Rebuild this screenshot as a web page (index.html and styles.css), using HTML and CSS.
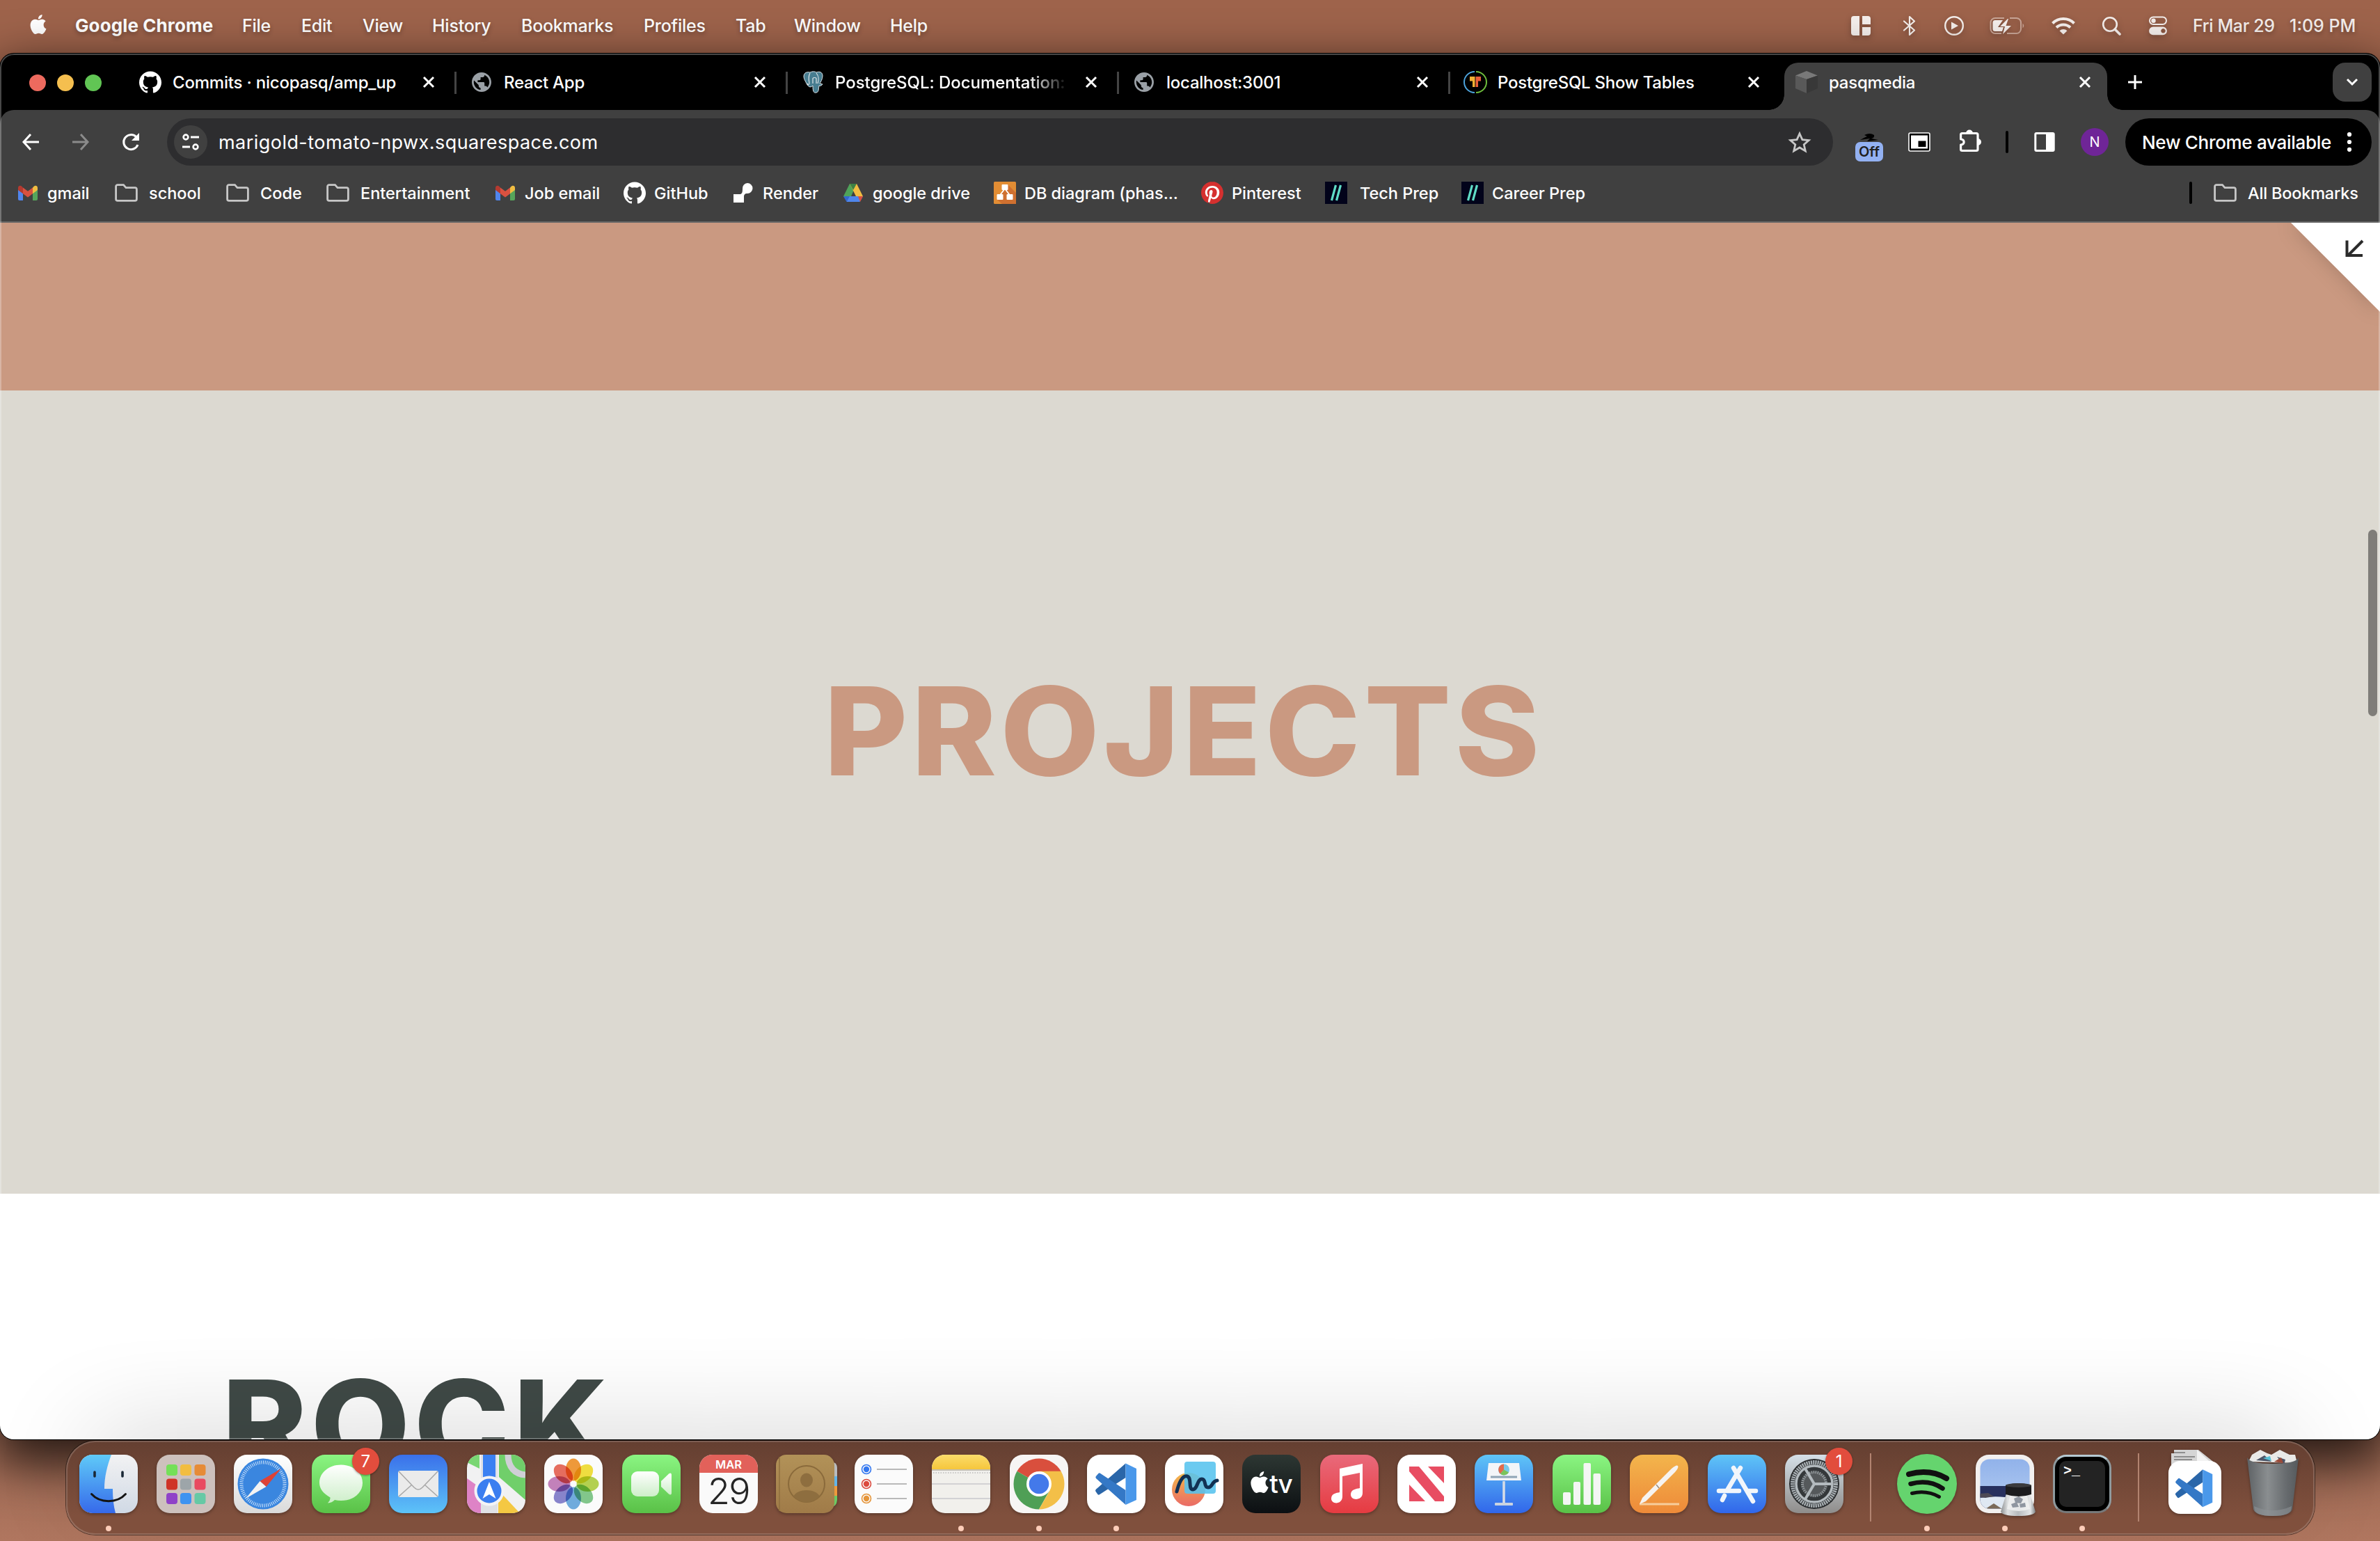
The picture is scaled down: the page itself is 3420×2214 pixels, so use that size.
FILE: index.html
```html
<!DOCTYPE html>
<html lang="en">
<head>
<meta charset="utf-8">
<title>pasqmedia</title>
<link rel="stylesheet" href="styles.css">
</head>
<body>
<svg width="0" height="0" class="defs" aria-hidden="true">
  <defs>
    <linearGradient id="gGreen" x2="0" y2="1"><stop offset="0" stop-color="#8af582"/><stop offset="1" stop-color="#5ac147"/></linearGradient>
    <linearGradient id="gMail" x2="0" y2="1"><stop offset="0" stop-color="#3a70ea"/><stop offset="1" stop-color="#5dc3f8"/></linearGradient>
    <linearGradient id="gBlue" x2="0" y2="1"><stop offset="0" stop-color="#5fc5f7"/><stop offset="1" stop-color="#3166ea"/></linearGradient>
    <linearGradient id="gWhite" x2="0" y2="1"><stop offset="0" stop-color="#fff"/><stop offset="1" stop-color="#dadada"/></linearGradient>
    <linearGradient id="gBubble" x2="0" y2="1"><stop offset="0" stop-color="#fff"/><stop offset="1" stop-color="#cdeec9"/></linearGradient>
    <linearGradient id="gMusic" x2="0" y2="1"><stop offset="0" stop-color="#e96a7b"/><stop offset="1" stop-color="#e63b41"/></linearGradient>
    <linearGradient id="gOrange" x2="0" y2="1"><stop offset="0" stop-color="#f3b54c"/><stop offset="1" stop-color="#ee8a39"/></linearGradient>
    <linearGradient id="gNotes" x2="0" y2="1"><stop offset="0" stop-color="#fbdc6a"/><stop offset="1" stop-color="#f6c63c"/></linearGradient>
    <linearGradient id="gBook" x2="0" y2="1"><stop offset="0" stop-color="#b29258"/><stop offset="1" stop-color="#a07b48"/></linearGradient>
    <linearGradient id="gSet" x2="0" y2="1"><stop offset="0" stop-color="#d5e0e8"/><stop offset="1" stop-color="#8f8d8b"/></linearGradient>
    <linearGradient id="gSky" x2="0" y2="1"><stop offset="0" stop-color="#91b2ea"/><stop offset="1" stop-color="#b4cdf2"/></linearGradient>
    <linearGradient id="gBin"><stop offset="0" stop-color="#5d6164"/><stop offset=".4" stop-color="#8a8e90"/><stop offset=".75" stop-color="#686c6f"/><stop offset="1" stop-color="#55595c"/></linearGradient>
    <linearGradient id="gJar"><stop offset="0" stop-color="#8b8f91"/><stop offset=".2" stop-color="#dfe1e2"/><stop offset=".5" stop-color="#b6babd"/><stop offset=".85" stop-color="#e3e5e6"/><stop offset="1" stop-color="#7d8183"/></linearGradient>
    <linearGradient id="gFaceL" x2="0" y2="1"><stop offset="0" stop-color="#5fcaf8"/><stop offset="1" stop-color="#3669ea"/></linearGradient>
    <linearGradient id="gFaceR" x2="0" y2="1"><stop offset="0" stop-color="#f2f2f3"/><stop offset="1" stop-color="#d0d9e5"/></linearGradient>
    <linearGradient id="gPeach" x2="0" y2="1"><stop offset="0" stop-color="#f3b94a"/><stop offset="1" stop-color="#ea6a66"/></linearGradient>
    <clipPath id="sq"><rect width="84" height="84" rx="19"/></clipPath>
    <clipPath id="photo"><rect x="6.500" y="6.500" width="71" height="71" rx="13"/></clipPath>
    <symbol id="apple" viewBox="0 0 24 24"><path d="M12.152 6.896c-.948 0-2.415-1.078-3.960-1.040-2.040.027-3.910 1.183-4.961 3.014-2.117 3.675-.546 9.103 1.519 12.090 1.013 1.454 2.208 3.090 3.792 3.039 1.520-.065 2.090-.987 3.935-.987 1.831 0 2.350.987 3.960.948 1.637-.026 2.676-1.480 3.676-2.948 1.156-1.688 1.636-3.325 1.662-3.415-.039-.013-3.182-1.221-3.220-4.857-.026-3.040 2.480-4.494 2.597-4.559-1.429-2.090-3.623-2.324-4.390-2.376-2-.156-3.675 1.090-4.610 1.090zM15.530 3.830c.843-1.012 1.400-2.427 1.245-3.830-1.207.052-2.662.805-3.532 1.818-.780.896-1.454 2.338-1.273 3.714 1.338.104 2.715-.688 3.559-1.701"/></symbol>
    <symbol id="github" viewBox="0 0 24 24"><path d="M12 .297c-6.630 0-12 5.373-12 12 0 5.303 3.438 9.800 8.205 11.385.600.113.820-.258.820-.577 0-.285-.010-1.040-.015-2.040-3.338.724-4.042-1.610-4.042-1.610C4.422 18.070 3.633 17.700 3.633 17.700c-1.087-.744.084-.729.084-.729 1.205.084 1.838 1.236 1.838 1.236 1.070 1.835 2.809 1.305 3.495.998.108-.776.417-1.305.760-1.605-2.665-.300-5.466-1.332-5.466-5.930 0-1.310.465-2.380 1.235-3.220-.135-.303-.540-1.523.105-3.176 0 0 1.005-.322 3.300 1.230.960-.267 1.980-.399 3-.405 1.020.006 2.040.138 3 .405 2.280-1.552 3.285-1.230 3.285-1.230.645 1.653.240 2.873.120 3.176.765.840 1.230 1.910 1.230 3.220 0 4.610-2.805 5.625-5.475 5.920.420.360.810 1.096.810 2.220 0 1.606-.015 2.896-.015 3.286 0 .315.210.690.825.570C20.565 22.092 24 17.592 24 12.297c0-6.627-5.373-12-12-12"/></symbol>
    <symbol id="globe" viewBox="2 2 20 20"><path d="M12 2C6.480 2 2 6.480 2 12s4.480 10 10 10 10-4.480 10-10S17.520 2 12 2zm-1 17.930c-3.950-.490-7-3.850-7-7.930 0-.620.080-1.210.210-1.790L9 15v1c0 1.100.900 2 2 2v1.930zm6.900-2.540c-.260-.810-1-1.390-1.900-1.390h-1v-3c0-.550-.450-1-1-1H8v-2h2c.550 0 1-.450 1-1V7h2c1.100 0 2-.900 2-2v-.410c2.930 1.190 5 4.060 5 7.410 0 2.080-.800 3.970-2.100 5.390z"/></symbol>
    <symbol id="close" viewBox="0 0 18 18"><path d="M2 2l14 14M16 2L2 16" stroke="currentColor" stroke-width="3" fill="none"/></symbol>
    <symbol id="folder" viewBox="0 0 33 26"><path d="M4 1.600h8.500l3.500 4h13a2.400 2.400 0 0 1 2.400 2.400v14a2.400 2.400 0 0 1-2.400 2.400H4A2.400 2.400 0 0 1 1.600 22V4A2.400 2.400 0 0 1 4 1.600z" fill="none" stroke="#c7c7c7" stroke-width="2.800"/></symbol>
    <symbol id="gmail" viewBox="0 0 32 32"><path d="M2 9v16a2 2 0 0 0 2 2h5V14z" fill="#5085ed"/><path d="M30 9v16a2 2 0 0 1-2 2h-5V14z" fill="#56a55b"/><path d="M23 8.500l2-2c2-1.500 5-.5 5 2.500v3l-7 5.200z" fill="#f0bd42"/><path d="M9 8.500l-2-2C5 5 2 6 2 9v3l7 5.200z" fill="#b43a30"/><path d="M9 8.500l7 5.300 7-5.300v8.700l-7 5.300-7-5.300z" fill="#d95140"/></symbol>
    <symbol id="slashes" viewBox="0 0 32 32"><rect width="32" height="32" fill="#02031a"/><path d="M9.500 27L15.500 5M16.500 27L22.500 5" stroke="#5fdcc6" stroke-width="3.200"/></symbol>
    <symbol id="vscode" viewBox="0 0 84 84"><path d="M55.500 12.500V33L18 57.300q-1.500 1-2.600-.3l-3-4.300q-1-1.700.5-3z" fill="#2a66a9"/><path d="M55.500 72V51L19 26.700q-1.500-1-2.600.3l-3.700 4.300q-1 1.700.5 3z" fill="#3478c6"/><path d="M55.500 12.500L71 20v45l-15.500 7z" fill="#4a98ea"/></symbol>
  </defs>
</svg>

<header class="menubar">
  <nav class="menus">
    <svg class="apple"><use href="#apple"/></svg>
    <b>Google Chrome</b><span>File</span><span>Edit</span><span>View</span><span>History</span><span>Bookmarks</span><span>Profiles</span><span>Tab</span><span>Window</span><span>Help</span>
  </nav>
  <div class="status">
    <svg width="28" height="28" viewBox="0 0 28 28"><path d="M4 0h8v28H4a4 4 0 0 1-4-4V4a4 4 0 0 1 4-4zM16 0h8a4 4 0 0 1 4 4v8H16zM16 16h12v8a4 4 0 0 1-4 4h-8z"/></svg>
    <svg width="20" height="30" viewBox="0 0 20 30"><path d="M2 8.500l15 13-7 6.500V2l7 6.500-15 13" fill="none" stroke="#f5efec" stroke-width="2.200" stroke-linejoin="round" stroke-linecap="round"/></svg>
    <svg width="30" height="30" viewBox="0 0 30 30"><circle cx="15" cy="15" r="12.800" fill="none" stroke="#f5efec" stroke-width="2.400"/><path d="M11 9.500l10 5.500-10 5.500z"/></svg>
    <svg width="52" height="28" viewBox="0 0 52 28"><path d="M22 3H9a6.500 6.500 0 0 0-6.500 6.500v9A6.500 6.500 0 0 0 9 25h9M30 3h9.500A6.500 6.500 0 0 1 46 9.500v9a6.500 6.500 0 0 1-6.500 6.500H26" fill="none" stroke="#c9a596" stroke-width="2"/><path d="M48.500 10.500q3.500 3.500 0 7z" fill="#c9a596"/><path d="M9 6h11l-7 10h8l-2 6H9a3.500 3.500 0 0 1-3.500-3.500v-9A3.500 3.500 0 0 1 9 6z"/><path d="M27 4L16 15h7l-3 11 12-12h-7.500l3.500-10z"/></svg>
    <svg width="36" height="26" viewBox="0 0 36 26"><path d="M2.500 9.500a22 22 0 0 1 31 0M8 15.500a14.500 14.500 0 0 1 20 0" fill="none" stroke="#f5efec" stroke-width="4"/><path d="M18 25.500l-5.500-5.300a8 8 0 0 1 11 0z"/></svg>
    <svg width="28" height="28" viewBox="0 0 28 28"><circle cx="12" cy="12" r="9.800" fill="none" stroke="#f5efec" stroke-width="2.600"/><path d="M19 19l7 7" stroke="#f5efec" stroke-width="3.600" stroke-linecap="round"/></svg>
    <svg width="28" height="28" viewBox="0 0 28 28"><rect x="2" y="1.500" width="24" height="10.500" rx="5.200" fill="none" stroke="#f5efec" stroke-width="2"/><circle cx="7.500" cy="6.800" r="3.200"/><path fill-rule="evenodd" d="M7 15.500h14a5.800 5.800 0 0 1 0 11.800H7a5.800 5.800 0 0 1 0-11.800zm14.500 2.600a3.200 3.200 0 1 0 .01 0z"/></svg>
    <span class="date">Fri Mar 29</span><span class="time">1:09 PM</span>
  </div>
</header>

<main class="window">
  <div class="tabstrip">
    <div class="lights"><i class="red"></i><i class="amber"></i><i class="green"></i></div>
    <div class="tab"><svg class="fav"><use href="#github"/></svg><span class="t1">Commits · nicopasq/amp_up</span><svg class="x"><use href="#close"/></svg></div>
    <div class="tab"><svg class="fav globe"><use href="#globe"/></svg><span>React App</span><svg class="x"><use href="#close"/></svg></div>
    <div class="tab"><svg class="fav" viewBox="0 0 32 32"><path d="M3 8C3 2 8 1 12 2c4-2 8-1 9 0 5-2 9 0 9 5s-3 9-4 11l4 1c-1 2-4 3-5 2-1 5 0 9-4 10s-5-2-5-10c-4 4-7 1-9-3S3 11 3 8z" fill="#477d90" stroke="#dfe6ea" stroke-width="1"/><path d="M12 3c-3 5-2 10-1 15m10-15c4 5 4 9 2 15m-12 0c-2 4-4 1-2 0m7 0v-7c0-2 5-2 5 0v7" fill="none" stroke="#dfe6ea" stroke-width="1.200"/></svg><span class="fade">PostgreSQL: Documentation:</span><svg class="x"><use href="#close"/></svg></div>
    <div class="tab"><svg class="fav globe"><use href="#globe"/></svg><span>localhost:3001</span><svg class="x"><use href="#close"/></svg></div>
    <div class="tab"><svg class="fav" viewBox="0 0 32 32"><path d="M15 1a15 15 0 0 0 0 30" fill="none" stroke="#4da3dc" stroke-width="2"/><path d="M17 1a15 15 0 0 1 0 30" fill="none" stroke="#6fbf3d" stroke-width="2"/><path d="M8 8h7.500v15H12v-8.500H8z" fill="#f2b134"/><path d="M24 8h-7.500v15H20v-8.500h4z" fill="#e9603a"/></svg><span>PostgreSQL Show Tables</span><svg class="x"><use href="#close"/></svg></div>
    <div class="tab active"><svg class="fav" viewBox="0 0 32 32"><path d="M16 0l16 6.500L16 12 0 6.500z" fill="#797979"/><path d="M0 6.500L16 12v20L0 25z" fill="#595959"/><path d="M32 6.500L16 12v20l16-7z" fill="#383838"/></svg><span>pasqmedia</span><svg class="x"><use href="#close"/></svg></div>
    <svg class="plus" viewBox="0 0 22 22"><path d="M11 1v20M1 11h20" stroke="#fff" stroke-width="3"/></svg>
    <div class="tabmenu"><svg width="18" height="12" viewBox="0 0 18 12"><path d="M2 2l7 7 7-7" fill="none" stroke="#fff" stroke-width="3"/></svg></div>
  </div>

  <div class="toolbar">
    <div class="navrow">
      <div class="navbtns">
        <svg width="26" height="26" viewBox="0 0 26 26"><path d="M13 2L3 13l10 11M3 13h22" fill="none" stroke="#fff" stroke-width="3"/></svg>
        <svg width="26" height="26" viewBox="0 0 26 26"><path d="M13 2l10 11-10 11M23 13H1" fill="none" stroke="#8b8b8b" stroke-width="3"/></svg>
        <svg width="26" height="26" viewBox="0 0 26 26"><path d="M23 17a10.500 10.500 0 1 1-2.500-11.500L24 9" fill="none" stroke="#fff" stroke-width="3"/><path d="M25 0v11H14z" fill="#fff"/></svg>
      </div>
      <div class="omnibox">
        <div class="siteinfo"><svg width="26" height="24" viewBox="0 0 26 24"><path d="M13 5h12M1 19h11" stroke="#fff" stroke-width="3"/><circle cx="6" cy="5" r="3.400" fill="none" stroke="#fff" stroke-width="2.600"/><circle cx="20" cy="19" r="3.400" fill="none" stroke="#fff" stroke-width="2.600"/></svg></div>
        <span class="url">marigold-tomato-npwx.squarespace.com</span>
        <svg class="star" viewBox="0 0 32 30"><path d="M16 3l3.900 8.600 9.300.9-7 6.200 2.100 9.200-8.300-4.900-8.300 4.900 2.100-9.200-7-6.200 9.300-.9z" fill="none" stroke="#c7c7c7" stroke-width="2.800"/></svg>
      </div>
      <div class="extensions">
        <div class="ext-off"><svg width="26" height="11" viewBox="0 0 26 11"><path d="M0 9q7-4 10-5L6 2q8-4 14 0 1 4-4 5l10 2-8 1-8 1 4-4z" fill="#000"/></svg><b>Off</b></div>
        <svg class="pip" viewBox="0 0 32 28"><rect x="1" y="1" width="30" height="26" rx="2" fill="#000" stroke="#fff" stroke-width="1.600"/><rect x="4" y="4.500" width="24" height="19" fill="#fff"/><rect x="14.500" y="12.500" width="11" height="8.500" fill="#000"/></svg>
        <svg class="puzzle" viewBox="0 0 34 34"><path d="M2.600 8.500q0-2 2-2H25q2 0 2 2v21q0 2-2 2H4.600q-2 0-2-2v-6.500q4.500-.5 4.500-4t-4.500-4z" fill="none" stroke="#fff" stroke-width="3.200" stroke-linejoin="round"/><path d="M10 6.500a5 5 0 0 1 10 0zM27 14a5 5 0 0 1 0 10z" fill="#fff"/></svg>
        <i class="vbar"></i>
        <svg class="panel" viewBox="0 0 30 28"><rect x="1.800" y="1.600" width="26.400" height="24.800" rx="1.500" fill="none" stroke="#fff" stroke-width="3"/><path d="M17 1h12v26H17z" fill="#fff"/></svg>
        <span class="avatar">N</span>
      </div>
      <div class="update"><span>New Chrome available</span><svg width="8" height="28" viewBox="0 0 8 28"><circle cx="4" cy="3.200" r="3.100" fill="#fff"/><circle cx="4" cy="14" r="3.100" fill="#fff"/><circle cx="4" cy="24.800" r="3.100" fill="#fff"/></svg></div>
    </div>
    <div class="bookmarks">
      <a><svg class="fav"><use href="#gmail"/></svg>gmail</a>
      <a class="dir"><svg><use href="#folder"/></svg>school</a>
      <a class="dir"><svg><use href="#folder"/></svg>Code</a>
      <a class="dir"><svg><use href="#folder"/></svg>Entertainment</a>
      <a><svg class="fav"><use href="#gmail"/></svg>Job email</a>
      <a><svg class="fav"><use href="#github"/></svg>GitHub</a>
      <a><svg class="fav" viewBox="0 0 32 32"><path d="M22 2a7 7 0 0 1 0 15c-4 0-5 2-5 5v8H2V18h9c3 0 4-2 4-8a7.500 7.500 0 0 1 7-8z" fill="#fff"/></svg>Render</a>
      <a><svg class="fav" viewBox="0 0 32 32"><path d="M11 3h10L9.500 29 2 21z" fill="#4fa35a"/><path d="M11 3h10l9 18H20z" fill="#f2bc42"/><path d="M11 3h10l-5 9z" fill="#3d8045"/><path d="M10 21h20l-4.500 8H6.500z" fill="#4f86ec"/><path d="M23 21h7l-4 8z" fill="#d95040"/><path d="M2 21h9l-4.500 8z" fill="#3367d0"/></svg>google drive</a>
      <a><svg class="fav" viewBox="0 0 32 32"><rect width="32" height="32" rx="1.500" fill="#e28d34"/><path d="M20 4l12 12v16H12L5 26z" fill="#cf7030"/><path d="M16 10L8.500 20M16 10l7.500 10" stroke="#fff" stroke-width="1.800"/><rect x="11.500" y="4" width="9" height="8" rx="1" fill="#fff"/><rect x="4.500" y="18" width="9" height="8" rx="1" fill="#fff"/><rect x="18.500" y="18" width="9" height="8" rx="1" fill="#fff"/></svg>DB diagram (phas...</a>
      <a><svg class="fav" viewBox="0 0 24 24"><circle cx="12" cy="12" r="11" fill="#fff"/><path fill="#d5302f" d="M12.017 0C5.396 0 .029 5.367.029 11.987c0 5.079 3.158 9.417 7.618 11.162-.105-.949-.199-2.403.041-3.439.219-.937 1.406-5.957 1.406-5.957s-.359-.720-.359-1.781c0-1.663.967-2.911 2.168-2.911 1.024 0 1.518.769 1.518 1.688 0 1.029-.653 2.567-.992 3.992-.285 1.193.600 2.165 1.775 2.165 2.128 0 3.768-2.245 3.768-5.487 0-2.861-2.063-4.869-5.008-4.869-3.410 0-5.409 2.562-5.409 5.199 0 1.033.394 2.143.889 2.741.099.120.112.225.085.345-.090.375-.293 1.199-.334 1.363-.053.225-.172.271-.401.165-1.495-.690-2.433-2.878-2.433-4.646 0-3.776 2.748-7.252 7.920-7.252 4.158 0 7.392 2.967 7.392 6.923 0 4.135-2.607 7.462-6.233 7.462-1.214 0-2.354-.629-2.758-1.379l-.749 2.848c-.269 1.045-1.004 2.352-1.498 3.146 1.123.345 2.306.535 3.550.535 6.607 0 11.985-5.365 11.985-11.987C23.970 5.390 18.592.026 11.985.026L12.017 0z"/></svg>Pinterest</a>
      <a class="wide"><svg class="fav"><use href="#slashes"/></svg>Tech Prep</a>
      <a><svg class="fav"><use href="#slashes"/></svg>Career Prep</a>
      <i class="vbar"></i>
      <a class="dir all"><svg><use href="#folder"/></svg>All Bookmarks</a>
    </div>
  </div>

  <div class="page">
    <section class="hero"></section>
    <section class="projects"><h1>PROJECTS</h1></section>
    <section class="work"><h2>ROCK</h2></section>
    <div class="corner"><svg viewBox="0 0 128 128"><path d="M0 0h128v128z" fill="#fff"/><path d="M103 26L82 47M80.500 25.500V47H103" fill="none" stroke="#2b2b2b" stroke-width="4"/></svg></div>
    <i class="scrollbar"></i>
  </div>
</main>

<footer class="dock">
  <div class="app on"><svg viewBox="0 0 84 84"><g clip-path="url(#sq)"><path d="M0 0h84v84H0z" fill="url(#gFaceR)"/><path d="M0 0h46C40 16 36 32 36 49h12c0 13 1 24 4 35H0z" fill="url(#gFaceL)"/></g><path d="M22 25v6M62 25v6" stroke="#1b2836" stroke-width="3.600" stroke-linecap="round"/><path d="M17.500 56.500c12 13.500 37 13.500 49 0" fill="none" stroke="#141414" stroke-width="3" stroke-linecap="round"/></svg></div>
  <div class="app"><svg viewBox="0 0 84 84"><rect width="84" height="84" rx="19" fill="#cdc1bd"/><g><rect x="14" y="14" width="16" height="16" rx="4" fill="#74e058"/><rect x="34" y="14" width="16" height="16" rx="4" fill="#f2bd41"/><rect x="54.500" y="14" width="16" height="16" rx="4" fill="#e68b37"/><rect x="14" y="34.500" width="16" height="16" rx="4" fill="#cf3327"/><rect x="34" y="34.500" width="16" height="16" rx="4" fill="#9da5a9"/><rect x="54.500" y="34.500" width="16" height="16" rx="4" fill="#e94a60"/><rect x="14" y="55" width="16" height="16" rx="4" fill="#8f42c8"/><rect x="34" y="55" width="16" height="16" rx="4" fill="#3f93f0"/><rect x="54.500" y="55" width="16" height="16" rx="4" fill="#66c9a5"/></g></svg></div>
  <div class="app"><svg viewBox="0 0 84 84"><rect width="84" height="84" rx="19" fill="url(#gWhite)"/><circle cx="42" cy="42" r="36.500" fill="#3a86df"/><circle cx="42" cy="42" r="31" fill="none" stroke="#cfe4fa" stroke-width="5" stroke-dasharray="1 1.700"/><path d="M68 20L37.500 38l9 8z" fill="#de4236"/><path d="M17 63l20.500-25 9 8z" fill="#f3f3f3"/></svg></div>
  <div class="app"><svg viewBox="0 0 84 84"><rect width="84" height="84" rx="19" fill="url(#gGreen)"/><path d="M42 14.500c17 0 31 11 31 26s-14 25.500-31 25.500q-5 0-9-1-4 4-10 4.500 4-4 3.500-8C17 56 11 49 11 40.500c0-15 14-26 31-26z" fill="url(#gBubble)"/></svg><em class="badge">7</em></div>
  <div class="app"><svg viewBox="0 0 84 84"><rect width="84" height="84" rx="19" fill="url(#gMail)"/><rect x="13" y="23" width="58" height="38" rx="3" fill="#ebebeb"/><path d="M14 60l19-17M70 60L51 43M14 24l22 23q6 6 12 0l22-23" fill="none" stroke="#a9a9a9" stroke-width="1.600"/></svg></div>
  <div class="app"><svg viewBox="0 0 84 84"><g clip-path="url(#sq)"><path d="M0 0h84v84H0z" fill="#f1f1f2"/><path d="M0 0h18v20L0 11z" fill="#79d673"/><path d="M46 0h38v65L46 32z" fill="#70cf6a"/><path d="M0 34l20 14v36H0z" fill="#de83c6"/><path d="M45 44l39 40H45z" fill="#f4c843"/><path d="M52 46l32 30v8h-8L46 52z" fill="#f1f1f2"/><path d="M20 0h24v84H20z" fill="#e0e1e6"/><path d="M23 0h18v40H23z" fill="#3b80f2"/><path d="M59 0c0 18 10 28 25 29" fill="none" stroke="#cfcfd6" stroke-width="9"/></g><circle cx="32" cy="52" r="19.500" fill="#3b7ef0" stroke="#f3f3f6" stroke-width="4"/><path d="M32 39l9.500 24L32 57l-9.500 6z" fill="#fff"/></svg></div>
  <div class="app"><svg viewBox="0 0 84 84"><rect width="84" height="84" rx="19" fill="#fbfbfb"/><g class="petals"><ellipse cx="42" cy="21.500" rx="11" ry="16" fill="#f29c3b"/><ellipse cx="42" cy="21.500" rx="11" ry="16" fill="#f3e141" transform="rotate(45 42 42)"/><ellipse cx="42" cy="21.500" rx="11" ry="16" fill="#b6d451" transform="rotate(90 42 42)"/><ellipse cx="42" cy="21.500" rx="11" ry="16" fill="#84c98d" transform="rotate(135 42 42)"/><ellipse cx="42" cy="21.500" rx="11" ry="16" fill="#72aee0" transform="rotate(180 42 42)"/><ellipse cx="42" cy="21.500" rx="11" ry="16" fill="#8a86cf" transform="rotate(225 42 42)"/><ellipse cx="42" cy="21.500" rx="11" ry="16" fill="#c583bd" transform="rotate(270 42 42)"/><ellipse cx="42" cy="21.500" rx="11" ry="16" fill="#e96f5f" transform="rotate(315 42 42)"/></g></svg></div>
  <div class="app"><svg viewBox="0 0 84 84"><rect width="84" height="84" rx="19" fill="url(#gGreen)"/><rect x="13" y="24" width="40" height="36" rx="9" fill="url(#gBubble)"/><path d="M56 38l11-10.500q3.500-2.500 4 1v27q-.5 3.500-4 1L56 46z" fill="url(#gBubble)"/></svg></div>
  <div class="app"><div class="cal"><b>MAR</b><span>29</span></div></div>
  <div class="app"><svg viewBox="0 0 84 84"><path d="M76 11h6q5 2 5 8v12H76z" fill="#b9bcbf"/><path d="M76 31h11v14H76z" fill="#63b5e8"/><path d="M76 45h11v14H76z" fill="#ee9a3c"/><path d="M76 59h11v6q-1 8-5 9h-6z" fill="#6cca63"/><rect x="-1" width="84" height="84" rx="15" fill="url(#gBook)"/><path d="M4 3v78" stroke="#8f6f3f" stroke-width="1.500"/><circle cx="43" cy="42" r="26" fill="none" stroke="#8a6a3b" stroke-width="2"/><ellipse cx="43" cy="36.500" rx="9" ry="10" fill="#8e6e3f"/><path d="M24 60c6-12 32-12 38 0q-19 17-38 0z" fill="#8e6e3f"/></svg></div>
  <div class="app"><svg viewBox="0 0 84 84"><rect width="84" height="84" rx="19" fill="#fbfbfb"/><g fill="none" stroke-width="1.600"><circle cx="17" cy="21" r="6.500" stroke="#3478f0"/><circle cx="17" cy="42" r="6.500" stroke="#dc4a3e"/><circle cx="17" cy="63" r="6.500" stroke="#e5953a"/></g><circle cx="17" cy="21" r="4.200" fill="#3478f0"/><circle cx="17" cy="42" r="4.200" fill="#dc4a3e"/><circle cx="17" cy="63" r="4.200" fill="#e5953a"/><path d="M32 21h43M32 42h43M32 63h43" stroke="#b9b9b9" stroke-width="2"/></svg></div>
  <div class="app on"><svg viewBox="0 0 84 84"><g clip-path="url(#sq)"><path d="M0 0h84v84H0z" fill="#f1f0ec"/><path d="M0 0h84v21H0z" fill="url(#gNotes)"/><path d="M0 22h84" stroke="#b6b0a0" stroke-width="1.600"/><path d="M2 26h82" stroke="#b9b9b9" stroke-width="1.500" stroke-dasharray="1.500 2"/><path d="M0 42h84M0 63h84" stroke="#d2d2d4" stroke-width="1.800"/></g></svg></div>
  <div class="app on"><svg viewBox="0 0 84 84"><rect width="84" height="84" rx="19" fill="#f7f5f4"/><path d="M42 42L10.400 23.750A36.500 36.500 0 0 1 73.600 23.750z" fill="#d94f3d"/><path d="M42 42L10.400 23.750A36.500 36.500 0 0 0 42 78.500L58 50z" fill="#4f9f56"/><path d="M42 23.750H73.600A36.500 36.500 0 0 1 42 78.500L57.800 51z" fill="#f3bf48"/><circle cx="42" cy="42" r="18" fill="#fff"/><circle cx="42" cy="42" r="14.300" fill="#4379ea"/></svg></div>
  <div class="app on"><svg viewBox="0 0 84 84"><rect width="84" height="84" rx="19" fill="#fff"/><use href="#vscode"/></svg></div>
  <div class="app"><svg viewBox="0 0 84 84"><rect width="84" height="84" rx="19" fill="#fff"/><circle cx="34" cy="50" r="24" fill="url(#gPeach)"/><rect x="28" y="10" width="45" height="46" rx="4" fill="#57c3ee" opacity=".88"/><path d="M17 53c3-12 8-24 15-22s1 19 8 19 6-15 13-15 2 12 9 12 5-9 13-10" fill="none" stroke="#123153" stroke-width="5" stroke-linecap="round"/></svg></div>
  <div class="app"><div class="tv"><svg width="26" height="31" viewBox="2 0 20 24"><use href="#apple" width="24" height="24"/></svg><span>tv</span></div></div>
  <div class="app"><svg viewBox="0 0 84 84"><rect width="84" height="84" rx="19" fill="url(#gMusic)"/><path d="M61 13v42c0 11-17 12-17 2 0-7 8-8 13-9V26l-25 5v29c0 12-16 12-16 3 0-7 7-8 12-9V20z" fill="#fff"/></svg></div>
  <div class="app"><svg viewBox="0 0 84 84"><rect width="84" height="84" rx="19" fill="#fff"/><path d="M17 17h14l36 43v7H54L17 24z" fill="#e84d62"/><path d="M44 17h23v24zM17 43l23 24H17z" fill="#e84d62"/></svg></div>
  <div class="app"><svg viewBox="0 0 84 84"><rect width="84" height="84" rx="19" fill="url(#gBlue)"/><path d="M20 12h44l3 25H17z" fill="#f3f5f8"/><path d="M23 32h38" stroke="#8fa5b6" stroke-width="3"/><circle cx="42" cy="21.500" r="8" fill="#79c8e8"/><path d="M42 21.500V13.500a8 8 0 0 0-5 14z" fill="#e56a4a"/><path d="M42 21.500l-5 6a8 8 0 0 0 12-2z" fill="#7cc35a"/><path d="M42 38v33" stroke="#d7dde6" stroke-width="3.500"/><rect x="29" y="69" width="26" height="4" rx="1" fill="#c9d2e0"/></svg></div>
  <div class="app"><svg viewBox="0 0 84 84"><rect width="84" height="84" rx="19" fill="url(#gGreen)"/><g fill="#f4f6f4"><rect x="15" y="54" width="11" height="18" rx="2"/><rect x="30" y="39" width="10" height="33" rx="2"/><rect x="44.500" y="12" width="10.500" height="60" rx="2"/><rect x="58.500" y="27" width="10.500" height="45" rx="2"/></g></svg></div>
  <div class="app"><svg viewBox="0 0 84 84"><rect width="84" height="84" rx="19" fill="url(#gOrange)"/><path d="M14 71h57" stroke="#f6cd9c" stroke-width="3"/><path d="M14 71l4-9L60 20q7-6 9-4t-4 9L23 67z" fill="#f6f3f0"/><path d="M38 43l4 5" stroke="#9a8a78" stroke-width="1.500"/></svg></div>
  <div class="app"><svg viewBox="0 0 84 84"><rect width="84" height="84" rx="19" fill="url(#gBlue)"/><g stroke="#f2f6fb" stroke-width="6.500" stroke-linecap="round"><path d="M47 19L28 51M37 19l28 48M16 52h29M59 52h10M24 59l-3 6"/></g></svg></div>
  <div class="app"><svg viewBox="0 0 84 84"><rect width="84" height="84" rx="19" fill="url(#gSet)"/><circle cx="42" cy="42" r="36" fill="#2a2d2f"/><circle cx="42" cy="42" r="31" fill="none" stroke="#a9b0b4" stroke-width="6" stroke-dasharray="2.200 1"/><circle cx="42" cy="42" r="26" fill="#34383a" stroke="#b3babe" stroke-width="3.500"/><circle cx="42" cy="42" r="17" fill="#55595b" stroke="#8b9194" stroke-width="4" stroke-dasharray="2 1"/><path d="M42 42h26M42 42L29 20M42 42L29 64" stroke="#b3babe" stroke-width="4"/></svg><em class="badge">1</em></div>
  <i class="rule"></i>
  <div class="app on"><svg viewBox="0 0 84 84"><circle cx="42" cy="42" r="43" fill="#65d46e"/><g fill="none" stroke="#111" stroke-linecap="round"><path d="M16 28q30-8 54 6" stroke-width="8"/><path d="M18.500 42q26-7 46 6.500" stroke-width="6.500"/><path d="M20.500 55.500q21-5 39 5" stroke-width="5"/></g></svg></div>
  <div class="app on"><svg viewBox="0 0 84 84"><rect width="84" height="84" rx="19" fill="#f2f0ef"/><g clip-path="url(#photo)"><path d="M6 6h72v72H6z" fill="url(#gSky)"/><path d="M6 45h72v33H6z" fill="#27305e"/><path d="M6 62q20-3 36-1 16-3 36 0v17H6z" fill="#dfe8f2"/><path d="M6 56l12-1 8 5-12 2-8-1z" fill="#4d4a55"/><path d="M14 78l12-8 12 8z" fill="#7b6a58"/></g><path d="M44 56h34l8 26q-3 6-25 6t-25-6z" fill="url(#gJar)"/><path d="M49 59h25l4 19q-16 6-33 0z" fill="#f1f2f2" opacity=".8"/><path d="M55 63l7-3 6 4-3 6-8-1zM51 71l8-3 3 7-9 1zM63 71l8-2 1 6-8 1z" fill="#8f96a0"/><path d="M43 44q18-6 37 0v13q-18 6-37 0z" fill="#1c1c1e"/><ellipse cx="61.500" cy="44" rx="18.500" ry="3" fill="#3b3b3d"/></svg></div>
  <div class="app on"><div class="term"><span>&gt;_</span></div></div>
  <i class="rule"></i>
  <div class="app"><svg viewBox="0 0 84 84"><path d="M12 -7h35l25 20v10H8V-2h4z" fill="#d5d5d5"/><path d="M45-7l26 24H45z" fill="#f3f3f3"/><path d="M12 3h30M12 7h26M12-3h16" stroke="#777" stroke-width="1.400"/><rect x="4" y="9" width="76" height="76" rx="17" fill="#fff"/><use href="#vscode" x="3" y="10" width="76" height="76"/></svg></div>
  <div class="app"><svg viewBox="0 0 84 84"><path d="M7 10L12 0l12-7 10 5 6 2 12-7 14 7 8 0 3 12z" fill="#e9e9e7"/><path d="M18 8l12-7 10 9zM48 3l12 4-2 8z" fill="#4c5568"/><path d="M28 5l10-3 2 7z" fill="#59c1d6"/><path d="M44 10l10-6 3 8z" fill="#9b4a38"/><path d="M5 4q4 9 37 9t37-9L70 78q-2 10-28 10T14 78z" fill="url(#gBin)"/><path d="M15 74q27 12 54 0l-1 6q-4 8-26 8t-26-8z" fill="#8c9194" opacity=".6"/></svg></div>
</footer>
</body>
</html>
```
FILE: styles.css
```css
* { box-sizing: border-box; }
html, body { margin: 0; }
body {
  width: 3420px;
  height: 2214px;
  overflow: hidden;
  display: flex;
  flex-direction: column;
  font-family: Inter, "Liberation Sans", sans-serif;
  color: #fff;
  background: linear-gradient(#9e634b 0, #9e634b 80px, #a06b55 2100px, #b0765f 100%);
}
.defs { position: absolute; }
svg { flex: none; overflow: visible; }

/* macOS menu bar */
.menubar {
  height: 77px;
  flex: none;
  display: flex;
  justify-content: space-between;
  padding-bottom: 4px;
  font-size: 25px;
  font-weight: 500;
  text-shadow: 0 3px 6px rgba(0, 0, 0, .3);
  white-space: nowrap;
}
.menus {
  display: grid;
  grid-template-columns: 67px 240px 85px 88px 100px 128px 176px 132px 84px 138px 80px;
  align-items: center;
  padding-left: 41px;
  letter-spacing: -.25px;
}
.menus b { font-size: 26px; font-weight: 700; letter-spacing: .1px; }
.apple { width: 28px; height: 32px; fill: #fff; margin-bottom: 3px; }
.status {
  display: grid;
  grid-template-columns: 74px 59px 65px 89px 73px 67px 64px 139px 98px;
  align-items: center;
  width: 760px;
  color: #f5efec;
  letter-spacing: -.4px;
}
.status .time { letter-spacing: 0; }
.status svg { fill: #f5efec; filter: drop-shadow(0 3px 4px rgba(0, 0, 0, .25)); }

/* browser window */
.window {
  height: 1991px;
  flex: none;
  position: relative;
  display: flex;
  flex-direction: column;
  border-radius: 20px;
  overflow: hidden;
  background: #000;
  box-shadow: 0 0 0 1px #000, 0 26px 70px 8px rgba(0, 0, 0, .75);
}
.window::after {
  content: "";
  position: absolute;
  inset: 0;
  border-radius: 20px;
  box-shadow: inset 0 0 0 2px rgba(255, 255, 255, .28);
  pointer-events: none;
}
.tabstrip {
  height: 81px;
  flex: none;
  display: flex;
  align-items: flex-start;
  padding-top: 13px;
  font-size: 24px;
  font-weight: 500;
  letter-spacing: -.25px;
}
.lights { width: 178px; height: 58px; display: flex; gap: 16px; align-items: center; padding-left: 42px; }
.lights i { width: 24px; height: 24px; border-radius: 50%; }
.red { background: #ed6a5e; }
.amber { background: #f5bf4f; }
.green { background: #61c554; }
.tab {
  width: 476px;
  height: 56px;
  display: flex;
  align-items: center;
  padding-left: 22px;
  position: relative;
  white-space: nowrap;
}
.tab span { width: 340px; margin-left: 16px; overflow: hidden; }
.tab .t1 { letter-spacing: -.2px; }
.tab::after {
  content: "";
  position: absolute;
  right: -2px;
  top: 13px;
  width: 3px;
  height: 32px;
  background: #444;
}
.tab:nth-child(6)::after, .tab.active::after { display: none; }
.tab .fade { letter-spacing: -.05px; -webkit-mask-image: linear-gradient(90deg, #000 278px, transparent 335px); mask-image: linear-gradient(90deg, #000 278px, transparent 335px); }
.fav { width: 32px; height: 32px; fill: #fff; }
.fav.globe { width: 28px; height: 28px; margin: 0 2px; fill: #9aa0a6; }
.x { width: 18px; height: 18px; margin-left: 19px; }
.tab.active {
  width: 464px;
  height: 68px;
  margin-left: 6px;
  padding: 0 0 12px 16px;
  background: #404040;
  border-radius: 20px 20px 0 0;
}
.tab.active::before {
  content: "";
  position: absolute;
  left: -22px;
  right: -22px;
  bottom: 0;
  height: 22px;
  background:
    radial-gradient(circle at 0 0, transparent 21.500px, #404040 22px) left / 22px 22px no-repeat,
    radial-gradient(circle at 100% 0, transparent 21.500px, #404040 22px) right / 22px 22px no-repeat;
}
.plus { width: 22px; height: 22px; margin: 17px 0 0 29px; }
.tabmenu {
  width: 56px;
  height: 56px;
  margin-left: auto;
  margin-right: 12px;
  border-radius: 18px;
  background: #404040;
  display: grid;
  place-items: center;
}

.toolbar {
  height: 162px;
  flex: none;
  background: #404040;
  border-radius: 20px 20px 0 0;
  border-bottom: 2px solid #666;
}
.navrow { height: 92px; display: flex; align-items: center; font-weight: 500; }
.navbtns { width: 240px; display: flex; padding-left: 31px; gap: 46px; }
.omnibox {
  width: 2394px;
  height: 68px;
  border-radius: 34px;
  background: #2d2d2f;
  display: flex;
  align-items: center;
  padding: 0 32px 0 10px;
}
.siteinfo { width: 48px; height: 48px; border-radius: 50%; background: #404040; display: grid; place-items: center; margin-right: 16px; }
.url { font-size: 27px; font-weight: 400; letter-spacing: .45px; }
.star { width: 32px; height: 30px; margin-left: auto; }
.extensions { width: 420px; display: flex; align-items: center; padding-left: 32px; }
.ext-off { width: 40px; height: 68px; display: flex; flex-direction: column; align-items: center; padding-top: 22px; margin-right: 36px; }
.ext-off b { width: 40px; height: 28px; border-radius: 7px; background: #93b1f2; color: #1f1f1f; font-size: 20px; line-height: 28px; text-align: center; font-weight: 600; }
.ext-off svg { margin-bottom: 1px; }
.pip { width: 32px; height: 28px; margin-right: 41px; }
.puzzle { width: 34px; height: 34px; margin-right: 33px; margin-bottom: 4px; }
.vbar { width: 4px; height: 32px; border-radius: 2px; background: #000; }
.extensions .vbar { margin-right: 37px; }
.panel { width: 30px; height: 28px; margin-right: 37px; }
.avatar { width: 40px; height: 40px; flex: none; border-radius: 50%; background: #6f2597; font-size: 20px; line-height: 40px; text-align: center; font-weight: 400; }
.update {
  width: 354px;
  height: 68px;
  border-radius: 34px;
  background: #000;
  display: flex;
  align-items: center;
  justify-content: space-between;
  padding: 0 28px 0 24px;
  font-size: 26px;
  white-space: nowrap;
  letter-spacing: -.3px;
}
.bookmarks {
  height: 54px;
  display: grid;
  grid-template-columns: 141px 160px 144px 241px 186px 156px 158px 218px 298px 178px 196px 1046px 35px 237px;
  align-items: center;
  padding-left: 24px;
  font-size: 23.500px;
  font-weight: 500;
  white-space: nowrap;
  letter-spacing: -.02px;
}
.bookmarks a { display: flex; align-items: center; gap: 12px; }
.bookmarks a.wide { gap: 18px; }
.bookmarks a.dir { gap: 16px; }
.dir svg { width: 33px; height: 26px; }
.bookmarks a.all { letter-spacing: -.2px; }

/* site */
.page { flex: 1; position: relative; background: #fff; overflow: hidden; }
.hero { height: 241px; background: #ca9981; }
.projects { height: 1154px; padding: 401px 0 0 1184px; background: #dcd9d1; }
.page h1, .page h2 {
  margin: 0;
  font-size: 176px;
  line-height: 1;
  font-weight: 800;
  letter-spacing: 5px;
  transform: scaleX(1.05);
  transform-origin: left;
}
.page h1 { color: #ca9981; }
.work { padding: 243px 0 0 319px; }
.page h2 { color: #404a47; }
.corner { position: absolute; top: 0; right: 0; width: 128px; height: 128px; filter: drop-shadow(0 0 14px rgba(0, 0, 0, .18)); }
.corner svg { display: block; }
.scrollbar { position: absolute; right: 4px; top: 441px; width: 13px; height: 268px; border-radius: 7px; background: #7f7d79; }

/* dock */
.dock {
  width: 3231px;
  height: 135px;
  flex: none;
  margin: 2px 0 0 95px;
  padding: 0 0 0 4.500px;
  display: flex;
  position: relative;
  border-radius: 42px;
  background: linear-gradient(#643f31, #80503d 80%);
  box-shadow: inset 0 0 0 2px rgba(255, 255, 255, .16), 0 0 0 1px rgba(0, 0, 0, .5), 0 -30px 150px -40px rgba(0, 0, 0, .32);
}
.app { width: 111.450px; padding: 20px 0 0 14px; position: relative; flex: none; }
.app > svg { width: 84px; height: 84px; display: block; filter: drop-shadow(0 2px 2px rgba(0, 0, 0, .3)); }
.app.on::after {
  content: "";
  position: absolute;
  left: 52px;
  top: 121.500px;
  width: 8px;
  height: 8px;
  border-radius: 50%;
  background: #fdcdb9;
}
.badge {
  position: absolute;
  left: 72px;
  top: 10px;
  width: 39px;
  height: 39px;
  border-radius: 50%;
  background: #e24d3d;
  font: 400 24px/39px Inter, sans-serif;
  text-align: center;
  box-shadow: 0 1px 3px rgba(0, 0, 0, .4);
}
.petals ellipse { mix-blend-mode: multiply; }
.cal { width: 84px; height: 84px; border-radius: 19px; background: #fafafa; overflow: hidden; text-align: center; }
.cal b { display: block; height: 26px; background: #e2615a; font-size: 16.500px; line-height: 28px; font-weight: 600; }
.cal span { display: block; color: #262626; font-size: 52px; line-height: 54px; font-weight: 300; letter-spacing: -1.500px; }
.tv { width: 84px; height: 84px; border-radius: 19px; background: linear-gradient(#2d3733, #0c0f12); display: flex; justify-content: center; align-items: center; gap: 1px; fill: #fff; font-size: 37px; font-weight: 500; letter-spacing: -1px; }
.tv svg { margin-bottom: 5px; }
.tv span { line-height: 40px; }
.term { width: 84px; height: 84px; border-radius: 19px; background: #232323; border: 3px solid; border-color: #b5c9d2 #8e999d #77797a; box-shadow: inset 0 0 0 6px #000; padding: 10px 12px; font: 700 20px/22px "Liberation Mono", monospace; }
.rule { width: 2px; height: 98px; margin: 18px 24.300px 0; background: #b28370; flex: none; }
```
